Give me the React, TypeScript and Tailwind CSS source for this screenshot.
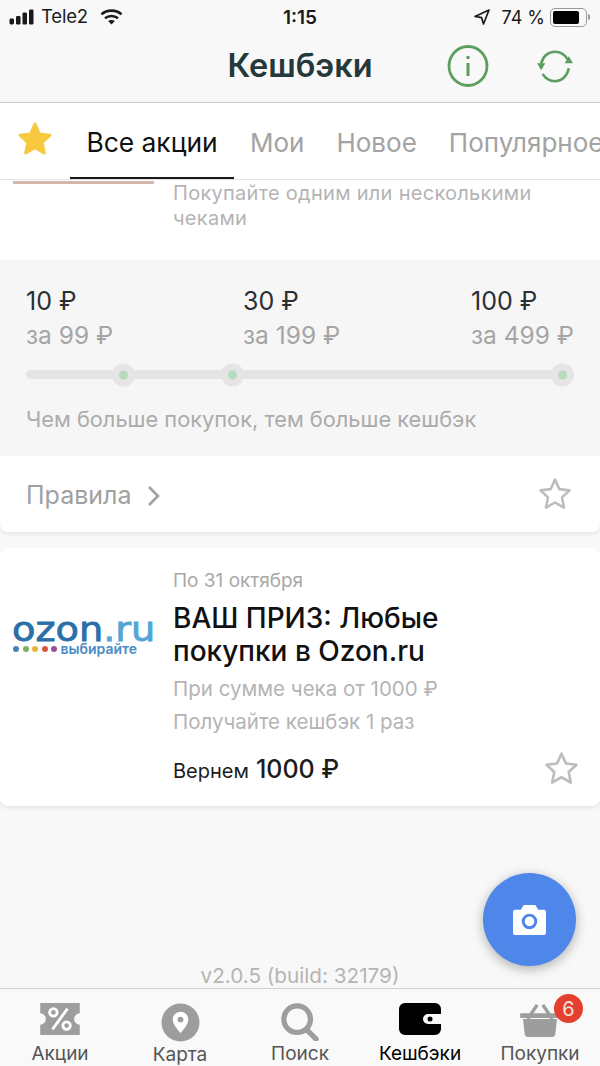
const font = { fontFamily: 'Inter, "Noto Sans", sans-serif' }

function StarOutline({ className }: { className?: string }) {
  return (
    <svg className={className} viewBox="0 0 32 32" fill="none" stroke="#bdbdbd" strokeWidth="2.4" strokeLinejoin="round">
      <path d="M16 2.5l4.1 8.9 9.6 1.2-7.1 6.6 1.9 9.6-8.5-4.8-8.500 4.800 1.900-9.600-7.100-6.600 9.600-1.200z" />
    </svg>
  )
}

function StatusBar() {
  return (
    <div className="relative flex h-10 items-center justify-between pb-[6px] pl-[9px] pr-[10px] text-[#1a1a1a]">
      <div className="flex items-center">
        <svg width="27" height="16" viewBox="0 0 27 16" fill="currentColor">
          <rect x="0.5" y="9.5" width="4.5" height="6" rx="1.4" />
          <rect x="7" y="7" width="4.5" height="8.5" rx="1.2" />
          <rect x="13.5" y="3.5" width="4.5" height="12" rx="1.2" />
          <rect x="20" y="0.5" width="4.5" height="15" rx="1.2" />
        </svg>
        <span className="ml-[5px] text-[18.5px] tracking-[-0.2px]">Tele2</span>
        <svg className="ml-[12px]" width="23" height="16" viewBox="0 0 23 16" fill="none" stroke="currentColor" strokeWidth="2.6">
          <path d="M1.4 5.4C7 .4 16 .4 21.6 5.4" />
          <path d="M5 9.2c3.6-3 9.4-3 13 0" />
          <path d="M11.5 15.5l-3.4-3.5c1.9-1.4 4.9-1.4 6.8 0z" fill="currentColor" stroke="none" />
        </svg>
      </div>
      <span className="absolute left-1/2 top-[6px] -translate-x-1/2 text-[19px] font-semibold leading-[24px]">1:15</span>
      <div className="flex items-center">
        <svg width="18" height="18" viewBox="0 0 18 18" fill="none" stroke="currentColor" strokeWidth="1.7" strokeLinejoin="round">
          <path d="M16 2L2 8.4l6.6 1.3L10.5 16z" />
        </svg>
        <span className="ml-[10px] text-[18px]">74 %</span>
        <div className="ml-[5px] flex h-[19px] w-[37px] items-center rounded-[5px] border border-[#9a9a9a] p-[2px]">
          <div className="h-full w-[26px] rounded-[2px] bg-black" />
        </div>
        <div className="ml-[1px] h-[6px] w-[2px] rounded-r-sm bg-[#9a9a9a]" />
      </div>
    </div>
  )
}

function Header() {
  return (
    <div className="relative flex h-[63px] items-center justify-center border-b border-[#c9c9c9]">
      <span className="mb-[9px] text-[32.5px] font-semibold text-[#25383a]">Кешбэки</span>
      <svg className="absolute left-[447px] top-[5px]" width="42" height="42" viewBox="0 0 42 42" fill="none" stroke="#5c9e5e" strokeWidth="2.8">
        <ellipse cx="21" cy="21" rx="19" ry="19.5" />
        <path d="M21 18v13" strokeWidth="3" />
        <circle cx="21" cy="12.5" r="1.8" fill="#5c9e5e" stroke="none" />
      </svg>
      <svg className="absolute left-[536px] top-[9px]" width="38" height="35" viewBox="0 0 40 38" fill="none" stroke="#5c9e5e" strokeWidth="2.8">
        <path d="M5 16C6.500 8 12.500 3 20 3c6 0 10.500 3 13.500 8" />
        <path d="M35 21c-1.500 8-7.500 14-15 14-6 0-10.500-3-13.500-8" />
        <path d="M0.500 15.500h9L5 23zM30.500 15.500h9L35 8z" fill="#5c9e5e" stroke="none" />
      </svg>
    </div>
  )
}

function Tabs() {
  return (
    <div className="relative flex h-[77px] items-center overflow-hidden border-b border-[#e2e2e2] bg-white text-[26px] text-[#a3a3a3]">
      <svg className="ml-[17px] mb-[5px] shrink-0" width="36" height="36" viewBox="0 0 36 36" fill="#f6c93f" stroke="#f6c93f" strokeWidth="3" strokeLinejoin="round">
        <path d="M18 3l4.500 10 10.500 1.200-7.800 7.200 2.100 10.600L18 26.700 8.700 32l2.100-10.600L3 14.200 13.500 13z" />
      </svg>
      <div className="relative ml-[17px] flex h-full w-[164px] shrink-0 items-center justify-center pt-[3px] text-[26.4px] text-[#111]">
        Все акции
        <div className="absolute bottom-0 left-0 right-0 h-[2px] bg-[#1a1a1a]" />
      </div>
      <span className="ml-[16px] shrink-0 pt-[3px]">Мои</span>
      <span className="ml-[32px] shrink-0 pt-[3px]">Новое</span>
      <span className="ml-[32px] shrink-0 pt-[3px]">Популярное</span>
    </div>
  )
}

function Milestone({ value, price, className }: { value: string; price: string; className: string }) {
  return (
    <div className={`whitespace-nowrap ${className}`}>
      <div className="text-[25px] leading-[32px] text-[#2b2f33]">{value}</div>
      <div className="mt-[2px] text-[24.5px] leading-[32px] text-[#a5a5a5]">{price}</div>
    </div>
  )
}

function Dot({ className }: { className: string }) {
  return (
    <div className={`absolute top-1/2 flex h-[23px] w-[23px] -translate-y-1/2 items-center justify-center rounded-full bg-[#e6e4e4] ${className}`}>
      <div className="h-[9px] w-[9px] rounded-full bg-[#b3dcc0]" />
    </div>
  )
}

function PromoDetails() {
  return (
    <div className="rounded-b-[8px] bg-white shadow-[0_2px_4px_rgba(0,0,0,0.08)]">
      <div className="h-[80px] pl-[173px] pt-[1px] text-[20px] leading-[25px] tracking-[0.28px] text-[#b4b4b4]">
        <p>Покупайте одним или несколькими чеками</p>
      </div>
      <div className="h-[196px] bg-[#f6f6f6] px-[26px] pt-[25px]">
        <div className="flex">
          <Milestone value="10 ₽" price="за 99 ₽" className="w-[217px] shrink-0" />
          <Milestone value="30 ₽" price="за 199 ₽" className="w-[228px] shrink-0" />
          <Milestone value="100 ₽" price="за 499 ₽" className="w-[103px] shrink-0" />
        </div>
        <div className="relative mt-[19px] h-[9px] rounded-full bg-[#e4e4e4]">
          <Dot className="left-[86px]" />
          <Dot className="left-[195px]" />
          <Dot className="left-[525px]" />
        </div>
        <p className="mt-[26px] text-[21.8px] leading-[28px] text-[#ababab]">Чем больше покупок, тем больше кешбэк</p>
      </div>
      <div className="flex h-[76px] items-center justify-between pl-[26px] pr-[28px]">
        <div className="flex items-center pt-[3px] text-[25px] text-[#a0a0a0]">
          Правила
          <svg className="ml-[15px]" width="14" height="22" viewBox="0 0 14 22" fill="none" stroke="#a0a0a0" strokeWidth="2.6">
            <path d="M2 2l9 9-9 9" />
          </svg>
        </div>
        <StarOutline className="h-[34px] w-[34px]" />
      </div>
    </div>
  )
}

function OzonLogo() {
  const dots = ['#4a80bd', '#7bb35a', '#e9b33f', '#d8583f', '#9c4f94']
  return (
    <div className="w-[146px]">
      <div
        className="origin-left scale-x-[1.16] text-[33px] leading-[30px] text-[#2a6fa8] [-webkit-text-stroke:0.8px_currentColor]"
        style={{ fontFamily: '"DejaVu Sans", sans-serif' }}
      >
        ozon<span className="text-[#52a5d6]">.ru</span>
      </div>
      <div className="-mt-[3px] flex items-center pl-[1px]">
        {dots.map(c => (
          <span key={c} className="mr-[3.5px] h-[6px] w-[6px] rounded-full" style={{ backgroundColor: c }} />
        ))}
        <span className="text-[14px] font-semibold leading-[14px] text-[#4a8bc4]">выбирайте</span>
      </div>
    </div>
  )
}

function OfferCard() {
  return (
    <div className="mt-[16px] flex h-[258px] rounded-[8px] bg-white shadow-[0_2px_4px_rgba(0,0,0,0.08)]">
      <div className="w-[173px] shrink-0 pl-[12px] pt-[67px]">
        <OzonLogo />
      </div>
      <div className="relative flex-1 pt-[21px]">
        <div className="text-[19px] leading-[24px] text-[#a8a8a8]">По 31 октября</div>
        <div className="mt-[9px] text-[28px] font-[450] leading-[33px] text-[#111]">
          ВАШ ПРИЗ: Любые<br />покупки в Ozon.ru
        </div>
        <div className="mt-[4px] text-[20.5px] leading-[33px] text-[#b4b4b4]">
          <div>При сумме чека от 1000 ₽</div>
          <div>Получайте кешбэк 1 раз</div>
        </div>
        <div className="mt-[13px] flex items-baseline text-[#1c1c1c]">
          <span className="text-[20px]">Вернем</span>
          <span className="ml-[7px] text-[25px] font-[450]">1000 ₽</span>
        </div>
        <StarOutline className="absolute bottom-[20px] right-[21px] h-[35px] w-[35px]" />
      </div>
    </div>
  )
}

function NavItem({ label, active, children }: { label: string; active?: boolean; children: React.ReactNode }) {
  return (
    <div className={`flex w-[120px] flex-col items-center ${active ? 'text-black' : 'text-[#555]'}`}>
      <div className="relative flex h-[46px] items-start justify-center pt-[7px]">{children}</div>
      <span className="mt-[1px] text-[19px] leading-[24px]">{label}</span>
    </div>
  )
}

function BottomNav() {
  return (
    <div className="flex h-[78px] border-t border-[#cfcfcf] bg-[#f9f9f9] pt-[7px]">
      <NavItem label="Акции">
        <svg width="42" height="32" viewBox="0 0 42 34">
          <path fill="#9d9d9d" d="M0 0h42v11a6 6 0 0 0 0 12v11H0V23a6 6 0 0 0 0-12z" />
          <g fill="none" stroke="#fff" strokeWidth="3">
            <circle cx="14" cy="10" r="4" />
            <circle cx="28" cy="24" r="4" />
            <path d="M29 6L13 28" />
          </g>
        </svg>
      </NavItem>
      <NavItem label="Карта">
        <svg width="39" height="39" viewBox="0 0 40 40">
          <circle cx="20" cy="20" r="19.500" fill="#9d9d9d" />
          <path fill="#fff" d="M20 9a8 8 0 0 0-8 8c0 5.500 8 14 8 14s8-8.500 8-14a8 8 0 0 0-8-8z" />
          <circle cx="20" cy="17" r="3" fill="#9d9d9d" />
        </svg>
      </NavItem>
      <NavItem label="Поиск">
        <svg width="38" height="38" viewBox="0 0 40 40" fill="none" stroke="#9d9d9d">
          <circle cx="17" cy="17" r="14" strokeWidth="5.500" />
          <path d="M27 28l10 10" strokeWidth="5.500" strokeLinecap="round" />
        </svg>
      </NavItem>
      <NavItem label="Кешбэки" active>
        <svg width="42" height="32" viewBox="0 0 42 32">
          <path fill="#000" d="M6 0h30a6 6 0 0 1 6 6v5H29a5 5 0 0 0 0 10h13v5a6 6 0 0 1-6 6H6a6 6 0 0 1-6-6V6a6 6 0 0 1 6-6z" />
          <circle cx="31" cy="16" r="2.500" fill="#000" />
        </svg>
      </NavItem>
      <NavItem label="Покупки">
        <svg width="40" height="35" viewBox="0 0 42 37" className="-mt-[1px]">
          <path fill="none" stroke="#9d9d9d" strokeWidth="3.500" d="M8 18L18 3M34 18L24 3" />
          <rect x="0" y="12" width="42" height="5" rx="1" fill="#9d9d9d" />
          <path fill="#9d9d9d" d="M3 18h36l-2 17a3 3 0 0 1-3 2H8a3 3 0 0 1-3-2z" />
        </svg>
        <div className="absolute left-[34px] top-[-2px] flex h-[29px] w-[29px] items-center justify-center rounded-full bg-[#e5402f] text-[20px] text-[#f5e0dc]">6</div>
      </NavItem>
    </div>
  )
}

export default function App() {
  return (
    <div className="flex h-[1066px] w-[600px] flex-col overflow-hidden bg-[#f8f8f8]" style={font}>
      <StatusBar />
      <Header />
      <Tabs />
      <div className="relative flex flex-1 flex-col overflow-hidden">
        <div className="absolute left-[13px] top-[1px] h-[3px] w-[141px] bg-[#d3b9aa]" />
        <PromoDetails />
        <OfferCard />
        <div className="mt-auto -mb-[1px] text-center text-[20.7px] leading-[26px] text-[#b5b5b5]">v2.0.5 (build: 32179)</div>
        <div className="absolute left-[483px] top-[693px] flex h-[93px] w-[93px] items-center justify-center rounded-full bg-[#4f86ea] shadow-[0_3px_12px_rgba(0,0,0,0.3)]">
          <svg width="33" height="31" viewBox="0 0 34 32">
            <path fill="#fff" d="M11 1h12l3 5h6a2 2 0 0 1 2 2v22a2 2 0 0 1-2 2H2a2 2 0 0 1-2-2V8a2 2 0 0 1 2-2h6z" />
            <circle cx="17" cy="18" r="6.500" fill="none" stroke="#4f86ea" strokeWidth="3" />
          </svg>
        </div>
      </div>
      <BottomNav />
    </div>
  )
}
